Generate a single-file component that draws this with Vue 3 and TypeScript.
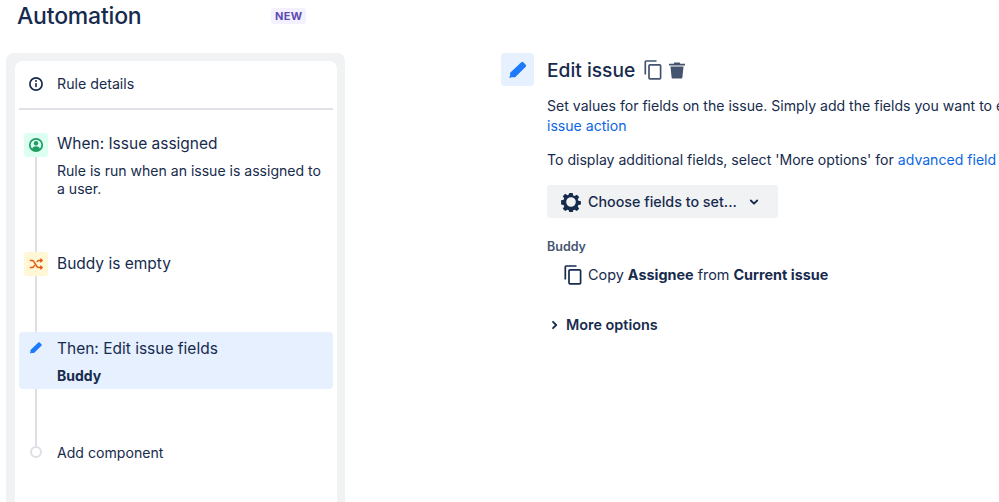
<script setup lang="ts">
// steps in the rule chain, icons are drawn in the template
const fields: string[] = ["Buddy"];
</script>

<template>
  <div class="page">
    <header class="top">
      <h1 class="title">Automation</h1>
      <span class="badge">NEW</span>
    </header>

    <div class="main">
      <aside class="side">
        <div class="card">
          <div class="details">
            <svg class="info" width="16" height="16" viewBox="0 0 16 16">
              <circle cx="8" cy="8" r="6.1" fill="none" stroke="#172b4d" stroke-width="1.7" />
              <rect x="7.2" y="7" width="1.6" height="4.2" rx=".6" fill="#172b4d" />
              <circle cx="8" cy="5" r="1" fill="#172b4d" />
            </svg>
            <span>Rule details</span>
          </div>

          <div class="step step-when">
            <div class="rail">
              <div class="ico ico-green">
                <svg width="16" height="16" viewBox="0 0 16 16">
                  <circle cx="8" cy="8" r="6.2" fill="none" stroke="#1f9d63" stroke-width="1.7" />
                  <circle cx="8" cy="6.3" r="2.2" fill="#1f9d63" />
                  <path d="M3.9 12.2c.4-2 2-3 4.1-3s3.700 1 4.100 3c-1 1.200-2.500 1.900-4.100 1.900s-3.100-.7-4.100-1.900z" fill="#1f9d63" />
                </svg>
              </div>
              <div class="line"></div>
            </div>
            <div class="body">
              <div class="name">When: Issue assigned</div>
              <p class="desc">Rule is run when an issue is assigned to a user.</p>
            </div>
          </div>

          <div class="step step-if">
            <div class="rail">
              <div class="ico ico-yellow">
                <svg width="16" height="16" viewBox="0 0 16 16" fill="none" stroke="#e8590c" stroke-width="1.500">
                  <path d="M1.800 4.400h2.400c2.800 0 3.400 7.200 6.400 7.200h3.200" />
                  <path d="M1.800 11.600h2.400c1.200 0 2-1.300 2.600-2.600M9 6c.4-.9.900-1.600 1.600-1.600h3.200" />
                  <path d="M12.300 2.700l1.700 1.700-1.700 1.700M12.300 9.900l1.700 1.700-1.700 1.700" />
                </svg>
              </div>
              <div class="line"></div>
            </div>
            <div class="body">
              <div class="name">Buddy is empty</div>
            </div>
          </div>

          <div class="step step-then">
            <div class="rail">
              <svg class="pen-sm" width="14" height="14" viewBox="0 0 14 14">
                <path d="M9.300 1.600a1 1 0 0 1 1.400 0l1.700 1.700a1 1 0 0 1 0 1.400L5 12H2.400l-.9.600-.6-.6.600-.9V8.900z" fill="#1d7afc" />
              </svg>
            </div>
            <div class="body">
              <div class="name">Then: Edit issue fields</div>
              <div class="picked" v-for="f in fields" :key="f">{{ f }}</div>
            </div>
          </div>

          <div class="joint"></div>

          <div class="step step-add">
            <div class="rail">
              <div class="dot"></div>
            </div>
            <div class="body">
              <div class="add">Add component</div>
            </div>
          </div>
        </div>
      </aside>

      <section class="edit">
        <div class="edit-head">
          <div class="edit-ico">
            <svg width="20" height="20" viewBox="0 0 14 14">
              <path d="M9.300 1.600a1 1 0 0 1 1.400 0l1.700 1.700a1 1 0 0 1 0 1.400L5 12H2.400l-.9.600-.6-.6.600-.9V8.900z" fill="#1d7afc" />
            </svg>
          </div>
          <h2 class="edit-title">Edit issue</h2>
          <svg class="copy" width="18" height="20" viewBox="0 0 18 20" fill="none" stroke="#44546f" stroke-width="1.700">
            <rect x="5" y="4.800" width="11.600" height="14" rx="1" />
            <path d="M1.300 14.500V1.800a.8.800 0 0 1 .8-.8h10.400" />
          </svg>
          <svg class="trash" width="18" height="18" viewBox="0 0 18 18">
            <path d="M6.300 1.600h5.400l.6 1.200H17v1.700H1V2.800h4.700z" fill="#44546f" />
            <path d="M2.500 5.600h13l-1.100 11a1 1 0 0 1-1 .9H4.600a1 1 0 0 1-1-.9z" fill="#44546f" />
          </svg>
        </div>

        <p class="text">Set values for fields on the issue. Simply add the fields you want to e<br /><a class="link">issue action</a></p>
        <p class="text second">To display additional fields, select 'More options' for <a class="link">advanced field</a></p>

        <button class="choose">
          <svg width="20" height="20" viewBox="0 0 20 20">
            <path fill="#172b4d" fill-rule="evenodd" d="M8.300 1h3.400l.5 2.500 1.400.6 2.200-1.400 2.400 2.400-1.400 2.200.6 1.400 2.500.5v3.400l-2.500.5-.6 1.400 1.400 2.200-2.400 2.400-2.200-1.400-1.400.6-.5 2.500H8.300l-.5-2.500-1.400-.6-2.200 1.400-2.400-2.400 1.400-2.200-.6-1.400-2.500-.5V8.300l2.500-.5.6-1.400-1.400-2.200 2.400-2.400 2.200 1.400 1.400-.6zM10 5.200a4.800 4.800 0 1 0 0 9.600 4.800 4.800 0 0 0 0-9.600z" />
          </svg>
          <span class="choose-label">Choose fields to set...</span>
          <svg width="10" height="10" viewBox="0 0 10 10" fill="none" stroke="#172b4d" stroke-width="1.800" stroke-linecap="round" stroke-linejoin="round">
            <path d="M1.800 3.500L5 6.700l3.200-3.200" />
          </svg>
        </button>

        <div class="field-label">Buddy</div>
        <div class="field-row">
          <svg width="18" height="20" viewBox="0 0 18 20" fill="none" stroke="#172b4d" stroke-width="1.700">
            <rect x="5" y="4.800" width="11.600" height="14" rx="1" />
            <path d="M1.300 14.500V1.800a.8.800 0 0 1 .8-.8h10.400" />
          </svg>
          <span>Copy <b>Assignee</b> from <b>Current issue</b></span>
        </div>

        <div class="more">
          <svg width="8" height="10" viewBox="0 0 8 10" fill="none" stroke="#172b4d" stroke-width="1.800" stroke-linecap="round" stroke-linejoin="round">
            <path d="M2 1.800L5.200 5 2 8.200" />
          </svg>
          <span>More options</span>
        </div>
      </section>
    </div>
  </div>
</template>

<style scoped>
.page {
  width: 999px;
  height: 502px;
  overflow: hidden;
  background: #fff;
  color: #172b4d;
  font-family: Inter, "Liberation Sans", sans-serif;
}
.top {
  display: flex;
  align-items: center;
  height: 53px;
  padding: 0 0 21px 17px;
  box-sizing: border-box;
}
.title {
  margin: 0;
  font-size: 23px;
  font-weight: 500;
  width: 254px;
  letter-spacing: -0.2px;
}
.badge {
  background: #f3f0ff;
  color: #5e4db2;
  font-size: 11px;
  font-weight: 700;
  letter-spacing: 0.3px;
  padding: 1px 4px;
  border-radius: 3px;
  line-height: 14px;
}
.main {
  display: flex;
  align-items: flex-start;
}
.side {
  width: 339px;
  height: 449px;
  margin-left: 6px;
  padding: 8px 8px 0 9px;
  box-sizing: border-box;
  background: #f1f2f4;
  border-radius: 8px 8px 0 0;
  flex-shrink: 0;
}
.card {
  height: 100%;
  background: #fff;
  border-radius: 8px 8px 0 0;
  padding: 0 4px;
}
.details {
  display: flex;
  align-items: center;
  height: 45px;
  padding: 0 0 2px 9px;
  border-bottom: 2px solid #dfe1e6;
  font-size: 14.2px;
}
.info {
  margin-right: 13px;
}
.step {
  display: flex;
}
.rail {
  display: flex;
  flex-direction: column;
  align-items: center;
  width: 24px;
  margin: 0 9px 0 5px;
}
.ico {
  width: 24px;
  height: 24px;
  border-radius: 3px;
  display: flex;
  align-items: center;
  justify-content: center;
  flex-shrink: 0;
}
.ico-green {
  background: #dcfff1;
}
.ico-yellow {
  background: #fff7d6;
}
.line {
  width: 2px;
  flex: 1;
  background: #dcdfe4;
}
.step-when {
  height: 119px;
  margin-top: 23px;
}
.step-if {
  height: 80px;
}
.step-if .body {
  padding-top: 1px;
}
.step-then {
  height: 57px;
  background: #e6f0ff;
  border-radius: 4px;
  padding-top: 6px;
  box-sizing: border-box;
}
.joint {
  width: 2px;
  height: 57px;
  margin-left: 16px;
  background: #dcdfe4;
}
.pen-sm {
  margin-top: 3px;
}
.name {
  font-size: 15.5px;
  line-height: 22px;
}
.desc {
  margin: 7px 0 0;
  font-size: 14.05px;
  line-height: 18px;
  width: 272px;
}
.picked {
  font-size: 14px;
  font-weight: 700;
  line-height: 18px;
  margin-top: 7px;
}
.dot {
  width: 12px;
  height: 12px;
  border: 2px solid #dcdfe4;
  border-radius: 50%;
  box-sizing: border-box;
}
.add {
  font-size: 14.1px;
  line-height: 14px;
}
.edit {
  margin-left: 156px;
  width: 498px;
  flex-shrink: 0;
}
.edit-head {
  display: flex;
  align-items: center;
  height: 33px;
}
.edit-ico {
  width: 33px;
  height: 33px;
  border-radius: 4px;
  background: #e6f0ff;
  display: flex;
  align-items: center;
  justify-content: center;
  margin-right: 13px;
}
.edit-title {
  margin: 0 9px 0 0;
  font-size: 19.2px;
  font-weight: 500;
}
.trash {
  margin-left: 6px;
}
.text {
  margin: 10px 0 0 46px;
  font-size: 14.08px;
  line-height: 20px;
  white-space: nowrap;
}
.second {
  margin-top: 14px;
}
.link {
  color: #0c66e4;
}
.choose {
  display: flex;
  align-items: center;
  width: 231px;
  height: 33px;
  margin: 15px 0 0 46px;
  padding: 0 0 0 14px;
  border: 0;
  border-radius: 3px;
  background: #f1f2f4;
  color: #172b4d;
  font: inherit;
  font-size: 14.3px;
  font-weight: 500;
}
.choose-label {
  margin: 0 12px 0 7px;
}
.field-label {
  margin: 22px 0 0 46px;
  font-size: 12.5px;
  font-weight: 600;
  line-height: 14px;
  color: #44546f;
}
.field-row {
  display: flex;
  align-items: center;
  gap: 6px;
  margin: 11px 0 0 63px;
  font-size: 14.4px;
  line-height: 20px;
}
.more {
  display: flex;
  align-items: center;
  gap: 7px;
  margin: 30px 0 0 50px;
  font-size: 14.4px;
  font-weight: 600;
  line-height: 20px;
}
</style>
